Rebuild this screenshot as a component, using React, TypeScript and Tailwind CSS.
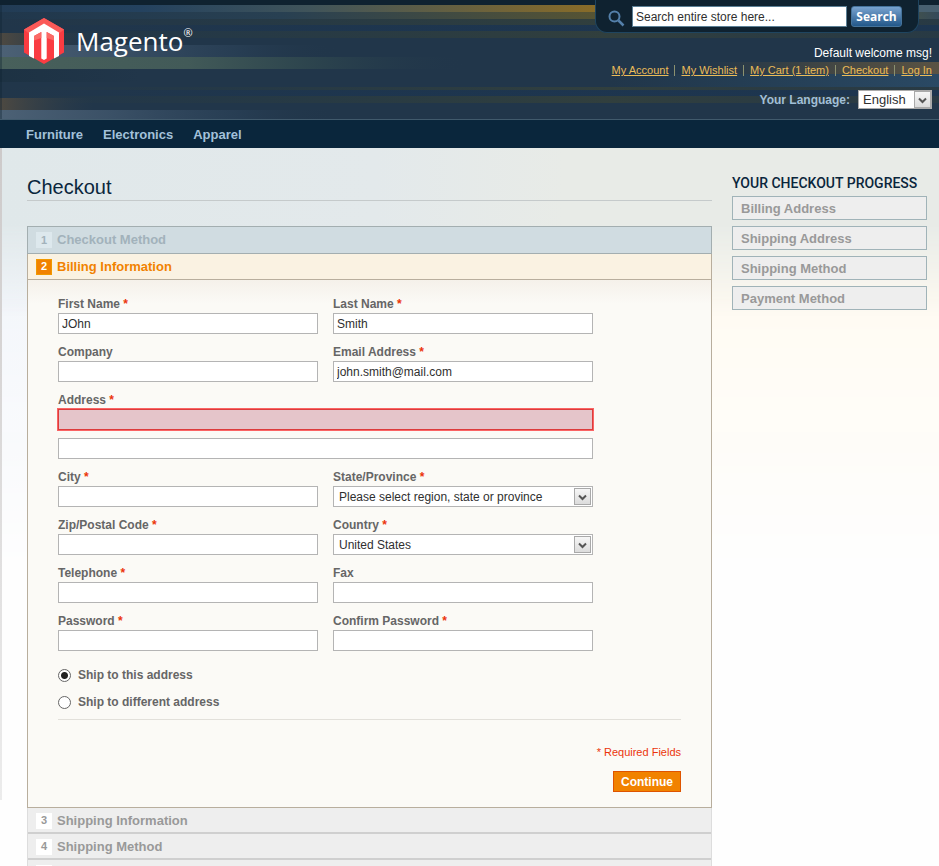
import type { ReactNode } from 'react';
import clsx from 'clsx';

const SANS = "font-['Liberation_Sans',Arial,sans-serif]";

function HeaderArt() {
  const stripes = [
    { y: 5, h: 7, fill: 'url(#gold)' },
    { y: 12, h: 7, fill: 'url(#bronze)' },
    { y: 19, h: 6, fill: 'url(#olive)' },
    { y: 25, h: 6, fill: 'url(#navy)' },
    { y: 31, h: 7, fill: 'url(#olive)' },
    { y: 33, h: 12, fill: 'url(#amber)' },
    { y: 45, h: 12, fill: 'url(#steel)' },
    { y: 57, h: 12, fill: 'url(#sage)' },
    { y: 69, h: 13, fill: 'url(#shade)' },
    { y: 62, h: 12, fill: 'url(#brown)' },
    { y: 74, h: 13, fill: 'url(#glow)' },
    { y: 87, h: 3, fill: 'url(#olive)' },
    { y: 90, h: 6, fill: 'url(#navy)' },
    { y: 96, h: 7, fill: 'url(#olive)' },
    { y: 98, h: 12, fill: 'url(#amber)' },
    { y: 110, h: 9, fill: 'url(#steel)' },
  ];
  const ramps: [string, [number, string, number][]][] = [
    ['gold', [[0, '#223c55', 1], [0.15, '#24425f', 1], [0.33, '#40545a', 1], [0.64, '#8a6c27', 1], [0.97, '#486070', 1], [1, '#486070', 1]]],
    ['bronze', [[0, '#20374c', 1], [0.3, '#284052', 1], [0.64, '#575433', 1], [0.98, '#3e4f50', 1], [1, '#34495a', 1]]],
    ['olive', [[0, '#2f3f3c', 0], [0.25, '#2f3f3c', 0.3], [0.65, '#33403c', 0.9], [0.8, '#33403c', 0.6], [1, '#33403c', 0.4]]],
    ['navy', [[0, '#1c3550', 0], [0.4, '#1c3550', 0.7], [1, '#1c3550', 0.8]]],
    ['amber', [[0, '#524b40', 0.9], [0.1, '#33404a', 0]]],
    ['steel', [[0, '#4c6175', 1], [0.12, '#3d5369', 0.9], [0.25, '#2c435a', 0.6], [0.36, '#21364a', 0]]],
    ['sage', [[0, '#48605b', 1], [0.2, '#425a58', 1], [0.33, '#2e464e', 0.9], [0.5, '#21364a', 0]]],
    ['shade', [[0, '#1b3040', 0.7], [0.15, '#1b3040', 0]]],
    ['brown', [[0, '#4b4a42', 0], [0.75, '#4b4a42', 0], [0.9, '#504d41', 0.8], [1, '#5a5344', 1]]],
    ['glow', [[0, '#28475f', 0], [0.65, '#28475f', 0], [1, '#2a4964', 1]]],
  ];
  return (
    <svg className="absolute inset-0 h-full w-full" viewBox="0 0 939 119" preserveAspectRatio="none" aria-hidden="true">
      <defs>
        {ramps.map(([id, stops]) => (
          <linearGradient key={id} id={id} x1="0" x2="939" gradientUnits="userSpaceOnUse">
            {stops.map(([at, color, alpha]) => (
              <stop key={at} offset={at} stopColor={color} stopOpacity={alpha} />
            ))}
          </linearGradient>
        ))}
      </defs>
      {stripes.map((s) => (
        <rect key={`${s.y}-${s.fill}`} x="0" y={s.y} width="939" height={s.h} fill={s.fill} />
      ))}
      <rect width="939" height="5" fill="#0f2230" />
      <rect y="5" width="2" height="114" fill="#0f2230" opacity="0.35" />
    </svg>
  );
}

function Logo() {
  return (
    <a href="#" aria-label="Magento" className="flex gap-3 text-white">
      <svg width="40" height="46" viewBox="0 0 40 46" aria-hidden="true">
        <path d="M20 0 40 11.500v23L20 46 0 34.500v-23z" fill="#fa3c42" />
        <path d="M20 0 40 11.500 35 15.500 20 6 5 15.500 0 11.500z" fill="#fb5a58" />
        <path d="M20 5.500 35 14.500v23.500L30 40.500V18L22.700 14v26.500L20 42l-2.700-1.500V14L10 18v22.500L5 38V14.500z" fill="#fff" />
        <path d="M17.300 14v6L10 22.500V18zM22.700 14v6l7.300 2.500V18z" fill="#fb6a66" />
      </svg>
      <span className="flex items-start font-['Open_Sans',sans-serif]">
        <span className="text-[26px] leading-[46px]">Magento</span>
        <span className="pt-[9px] text-[11px] leading-3">®</span>
      </span>
    </a>
  );
}

function Chevron({ className }: { className: string }) {
  return (
    <span className={clsx('pointer-events-none absolute flex items-center justify-center border border-[#a9a9a9] bg-linear-to-b from-[#f6f6f6] to-[#dcdcdc]', className)}>
      <svg width="9" height="8" viewBox="0 0 9 8" aria-hidden="true">
        <path d="M1 2.500 4.500 6 8 2.500" fill="none" stroke="#555" strokeWidth="2" />
      </svg>
    </span>
  );
}

function Header() {
  const links = ['My Account', 'My Wishlist', 'My Cart (1 item)', 'Checkout', 'Log In'];
  return (
    <header className="relative flex h-[120px] justify-between border-b border-[#415a6c] bg-[#21364a]">
      <HeaderArt />
      <div className="relative pt-[18px] pl-6">
        <Logo />
      </div>
      <div className="relative flex flex-col items-end pr-[7px]">
        <form className="mr-[13px] flex h-[33px] items-start rounded-b-xl border-r border-b border-l border-[#1f4560] bg-[#0f2230] pt-[6px] pr-4 pl-3" onSubmit={(e) => e.preventDefault()}>
          <svg className="mt-1 mr-[7px]" width="17" height="17" viewBox="0 0 17 17" aria-hidden="true">
            <circle cx="6.500" cy="6.500" r="5" fill="none" stroke="#5480aa" strokeWidth="2" />
            <path d="m10.500 10.500 5 5" stroke="#5480aa" strokeWidth="2.500" />
          </svg>
          <input aria-label="Search" defaultValue="Search entire store here..." className="mr-1 h-[21px] w-[215px] border border-[#5b7f95] bg-white px-[3px] text-xs text-[#2f2f2f]" />
          <button className="h-[21px] w-[51px] rounded-[3px] border border-[#45739b] bg-linear-to-b from-[#78a3cf] to-[#22588a] font-['Open_Sans',sans-serif] text-xs leading-4 font-bold text-white">Search</button>
        </form>
        <p className="mt-3 text-xs leading-4 text-white">Default welcome msg!</p>
        <nav aria-label="Account" className="mt-[3px] flex text-[11px] leading-3 text-[#ebbc58]">
          {links.map((l, i) => (
            <span key={l} className="flex items-center">
              {i > 0 && <span className="mx-[6px] h-[11px] w-px bg-[#8b9170]" />}
              <a href="#" className="underline">{l}</a>
            </span>
          ))}
        </nav>
        <div className="mt-[14px] flex items-center gap-2">
          <label htmlFor="lang" className="text-xs font-bold text-[#a0bfd8]">Your Language:</label>
          <div className="relative">
            <select id="lang" className="block h-[19px] w-[74px] appearance-none border border-[#aaa] bg-white px-1 text-[13px] leading-4 text-[#2f2f2f]">
              <option>English</option>
            </select>
            <Chevron className="top-px right-px h-[17px] w-[17px]" />
          </div>
        </div>
      </div>
    </header>
  );
}

function NavBar() {
  return (
    <nav aria-label="Catalog" className="flex h-7 items-center gap-5 bg-[#0a263c] pt-[2px] pl-[26px] text-[13px] font-bold text-[#a3c1da]">
      {['Furniture', 'Electronics', 'Apparel'].map((t) => (
        <a key={t} href="#">{t}</a>
      ))}
    </nav>
  );
}

const BOX = 'block h-[21px] w-full border border-[#b4b4b4] bg-white text-xs text-[#2f2f2f]';

function Label({ id, text, required }: { id: string; text: string; required?: boolean }) {
  return (
    <label htmlFor={id} className="block text-xs leading-[17px] font-bold text-[#666]">
      {text}
      {required && <span className="text-[#eb340a]"> *</span>}
    </label>
  );
}

function Field({ id, label, required, value, type = 'text' }: { id: string; label: string; required?: boolean; value?: string; type?: string }) {
  return (
    <div>
      <Label id={id} text={label} required={required} />
      <input id={id} type={type} defaultValue={value} className={clsx(BOX, 'px-[3px]')} />
    </div>
  );
}

function SelectField({ id, label, value }: { id: string; label: string; value: string }) {
  return (
    <div>
      <Label id={id} text={label} required />
      <div className="relative">
        <select id={id} className={clsx(BOX, 'appearance-none px-[5px]')}>
          <option>{value}</option>
        </select>
        <Chevron className="top-[2px] right-[2px] h-[17px] w-[17px]" />
      </div>
    </div>
  );
}

function Radio({ label, checked }: { label: string; checked?: boolean }) {
  return (
    <label className="flex items-center gap-[7px] text-xs leading-[15px] font-bold text-[#666]">
      <input type="radio" name="ship" defaultChecked={checked} className="h-[13px] w-[13px] appearance-none rounded-full border border-[#666] bg-white checked:bg-[radial-gradient(circle,#222_0_3px,#fff_4px)]" />
      {label}
    </label>
  );
}

function StepTitle({ n, title, row, badge }: { n?: number; title?: string; row: string; badge: string }) {
  return (
    <h2 className={clsx('flex items-center gap-[5px] pl-2 text-[13px] font-bold', row)}>
      <span className={clsx('flex h-4 w-4 items-center justify-center text-[11px]', badge)}>{n}</span>
      {title}
    </h2>
  );
}

function Row({ children }: { children: ReactNode }) {
  return <div className="grid grid-cols-2 gap-x-[15px]">{children}</div>;
}

function BillingForm() {
  return (
    <form className="border-b border-[#b8ae9d] bg-[#fbfaf6] bg-[linear-gradient(#f5f1ea,#fbfaf6_24px)] px-[30px] pt-4 pb-[15px]" onSubmit={(e) => e.preventDefault()}>
      <div className="flex max-w-[535px] flex-col gap-[10px]">
        <Row>
          <Field id="first" label="First Name" required value="JOhn" />
          <Field id="last" label="Last Name" required value="Smith" />
        </Row>
        <Row>
          <Field id="company" label="Company" />
          <Field id="email" label="Email Address" required value="john.smith@mail.com" />
        </Row>
        <div>
          <Label id="street" text="Address" required />
          <input id="street" aria-invalid="true" className="block h-[21px] w-full border border-[#dc3c3c] bg-[#e5c5ca] px-[3px] text-xs ring-1 ring-[#fa6464]" />
          <input aria-label="Address line 2" className={clsx(BOX, 'mt-2 px-[3px]')} />
        </div>
        <Row>
          <Field id="city" label="City" required />
          <SelectField id="state" label="State/Province" value="Please select region, state or province" />
        </Row>
        <Row>
          <Field id="zip" label="Zip/Postal Code" required />
          <SelectField id="country" label="Country" value="United States" />
        </Row>
        <Row>
          <Field id="phone" label="Telephone" required />
          <Field id="fax" label="Fax" />
        </Row>
        <Row>
          <Field id="password" label="Password" required type="password" />
          <Field id="confirm" label="Confirm Password" required type="password" />
        </Row>
      </div>
      <div className="mt-[17px] flex flex-col gap-3 border-b border-[#e2e0da] pb-[9px]">
        <Radio label="Ship to this address" checked />
        <Radio label="Ship to different address" />
      </div>
      <div className="mt-[25px] flex flex-col items-end gap-3">
        <p className="text-[11px] leading-[14px] text-[#eb340a]">* Required Fields</p>
        <button className="h-[21px] w-[68px] border border-[#de5400] bg-[#f18200] text-xs font-bold text-white">Continue</button>
      </div>
    </form>
  );
}

function Backdrop() {
  return (
    <div aria-hidden="true" className="absolute inset-0 -z-10">
      <div className="absolute inset-x-0 top-0 h-[420px] bg-[linear-gradient(90deg,#f3f6fb,#fffbf2_60%)] [mask-image:linear-gradient(#000_35%,transparent)]" />
      <div className="absolute inset-x-0 top-0 h-[170px] bg-[linear-gradient(90deg,#e0e8ea,#e3e9eb_40%,#e8ebe7_60%)] [mask-image:linear-gradient(#000_45%,transparent)]" />
      <div className="absolute top-0 left-0 h-[652px] w-[2px] bg-linear-to-b from-[#cdcaca] to-[#ececec]" />
    </div>
  );
}

const PENDING_ROW = 'h-[26px] border-b-2 border-[#cfcfcf] bg-[#eee] pt-px text-[#999]';

export default function App() {
  return (
    <div className={clsx('min-h-screen bg-[#fefefe]', SANS)}>
      <Header />
      <NavBar />
      <main className="relative isolate flex gap-5 pr-3 pl-[27px]">
        <Backdrop />
        <section className="min-w-0 flex-1">
          <h1 className="mt-[27px] border-b border-[#c5cacb] text-xl leading-[25px] text-[#0a263c]">Checkout</h1>
          <div className="mt-[25px]">
            <StepTitle n={1} title="Checkout Method" row="h-7 border border-[#a3aeb0] bg-[#d0dce1] text-[#a2b2bb]" badge="bg-[#dde8ed]" />
            <div className="border-x border-[#b8ae9d]">
              <StepTitle n={2} title="Billing Information" row="h-[26px] border-b border-[#b8ae9d] bg-[#faf2e2] text-[#f18200]" badge="border border-[#f19900] bg-[#f18200] text-white" />
              <BillingForm />
            </div>
            <div className="border-x border-[#ddd]">
              <StepTitle n={3} title="Shipping Information" row={PENDING_ROW} badge="bg-white" />
              <StepTitle n={4} title="Shipping Method" row={PENDING_ROW} badge="bg-white" />
              <StepTitle row={PENDING_ROW} badge="bg-white" />
            </div>
          </div>
        </section>
        <aside className="w-[195px] shrink-0">
          <h2 className="mt-[27px] font-[Roboto,sans-serif] text-sm leading-4 font-medium whitespace-nowrap text-[#0a263c]">YOUR CHECKOUT PROGRESS</h2>
          <ul className="mt-[5px] flex flex-col gap-[6px]">
            {['Billing Address', 'Shipping Address', 'Shipping Method', 'Payment Method'].map((t) => (
              <li key={t} className="flex h-6 items-center border border-[#a0b3b8] bg-[#eee] pt-px pl-2 text-[13px] font-bold text-[#999]">{t}</li>
            ))}
          </ul>
        </aside>
      </main>
    </div>
  );
}
